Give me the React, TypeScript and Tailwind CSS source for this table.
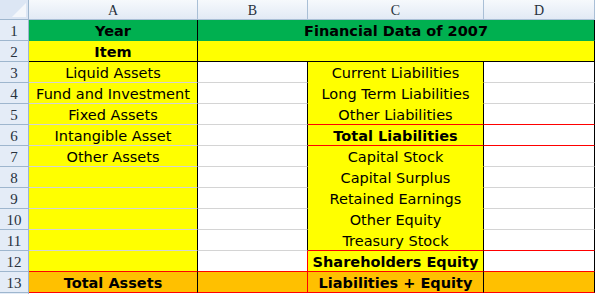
import React from "react";

type CellDef = {
  text?: string;
  bold?: boolean;
  cls: string;
  span?: boolean;
};

const Y = "bg-[#FFFF00]";
const W = "bg-white";
const O = "bg-[#FFC000]";

const gridA = "border-b-[#d4d4d4]";
const gridW = "border-b-[#d4d4d4]";

function dataRow(
  a: string,
  c: string,
  opts: { cBold?: boolean; redBottom?: boolean } = {}
): CellDef[] {
  const cd = opts.redBottom ? "border-b-[#ff0000]" : "border-b-[#FFFF00]";
  const dd = opts.redBottom ? "border-b-[#ff0000]" : gridW;
  return [
    { text: a, cls: `${Y} border-r-black ${gridA}` },
    { cls: `${W} border-r-black ${gridW}` },
    { text: c, bold: opts.cBold, cls: `${Y} border-r-black ${cd}` },
    { cls: `${W} border-r-black ${dd}` },
  ];
}

const rows: CellDef[][] = [
  [
    { text: "Year", bold: true, cls: "bg-[#00B050] border-r-black border-b-[#00B050]" },
    {
      text: "Financial Data of 2007",
      bold: true,
      span: true,
      cls: "bg-[#00B050] border-r-black border-b-[#00B050]",
    },
  ],
  [
    { text: "Item", bold: true, cls: `${Y} border-r-black border-b-black` },
    { span: true, cls: `${Y} border-r-black border-b-black` },
  ],
  dataRow("Liquid Assets", "Current Liabilities"),
  dataRow("Fund and Investment", "Long Term Liabilities"),
  dataRow("Fixed Assets", "Other Liabilities", { redBottom: true }),
  dataRow("Intangible Asset", "Total Liabilities", { cBold: true, redBottom: true }),
  dataRow("Other Assets", "Capital Stock"),
  dataRow("", "Capital Surplus"),
  dataRow("", "Retained Earnings"),
  dataRow("", "Other Equity"),
  dataRow("", "Treasury Stock", { redBottom: true }),
  [
    { cls: `${Y} border-r-black border-b-[#ff0000]` },
    { cls: `${W} border-r-[#ff0000] border-b-[#ff0000]` },
    { text: "Shareholders Equity", bold: true, cls: `${Y} border-r-black border-b-[#ff0000]` },
    { cls: `${W} border-r-black border-b-[#ff0000]` },
  ],
  [
    { text: "Total Assets", bold: true, cls: `${O} border-r-black border-b-[#ff0000]` },
    { cls: `${O} border-r-[#ff0000] border-b-[#ff0000]` },
    { text: "Liabilities + Equity", bold: true, cls: `${O} border-r-black border-b-[#ff0000]` },
    { cls: `${O} border-r-black border-b-[#ff0000]` },
  ],
];

export default function App() {
  return (
    <div className="w-[597px] h-[294px] bg-white overflow-hidden">
      <div className="grid grid-cols-[29px_169px_110px_176px_111px] grid-rows-[20px_repeat(13,21px)_20px]">
        {/* corner */}
        <div className="relative bg-[#DCE6F4] border-r border-b border-[#9EB6CE]">
          <svg className="absolute right-[2px] bottom-[2px]" width="14" height="14" viewBox="0 0 14 14">
            <polygon points="14,0 14,14 0,14" fill="#F4F7FB" />
          </svg>
        </div>
        {["A", "B", "C", "D"].map((l) => (
          <div
            key={l}
            className="bg-linear-to-b from-[#F6F9FC] to-[#E2EAF5] border-r border-b border-[#A9BFD6] text-center text-[14px] leading-[21px] text-[#27313d] font-['Liberation_Serif',serif]"
          >
            {l}
          </div>
        ))}
        {rows.map((r, i) => (
          <React.Fragment key={i}>
            <div className="bg-[#E4ECF7] border-r border-b border-[#9EB6CE] text-center text-[15px] leading-[22px] text-[#27313d] font-['Liberation_Serif',serif]">
              {i + 1}
            </div>
            {r.map((c, j) => (
              <div
                key={j}
                className={`${c.cls} ${c.span ? "col-span-3" : ""} border-r border-b pt-[1px] text-center whitespace-nowrap overflow-hidden text-[14.5px] leading-[20px] text-black font-['DejaVu_Sans',sans-serif] ${
                  c.bold ? "font-bold" : ""
                }`}
              >
                {c.text}
              </div>
            ))}
          </React.Fragment>
        ))}
        <div className="bg-[#E4ECF7] border-r border-[#9EB6CE]" />
        <div className="col-span-4 bg-white" />
      </div>
    </div>
  );
}
